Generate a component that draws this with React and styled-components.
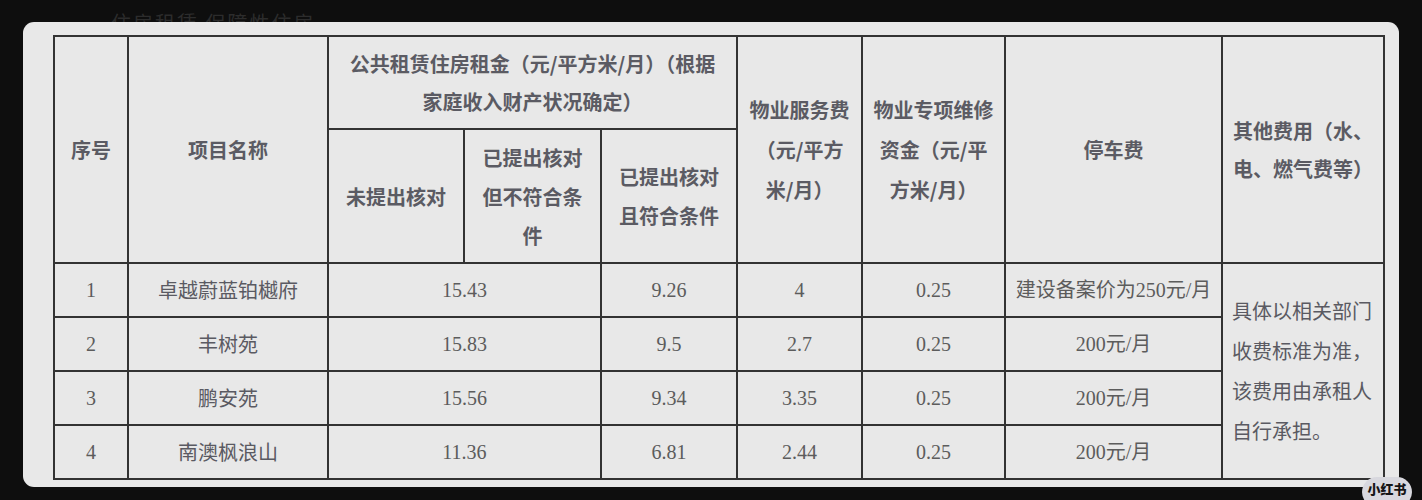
import React from "react";
import styled, { createGlobalStyle } from "styled-components";

const Global = createGlobalStyle`
  html, body { margin: 0; padding: 0; background: #0e0e0e; }
  body { width: 1422px; height: 500px; overflow: hidden; }
`;

const Page = styled.div`
  position: relative;
  width: 1422px;
  height: 500px;
  box-sizing: border-box;
  padding: 0 23px 0 23px;
  background: #0e0e0e;
`;

const Peek = styled.div`
  height: 22px;
  overflow: hidden;
  padding-left: 88px;
  box-sizing: border-box;
  font-family: "Noto Sans CJK SC", sans-serif;
  font-size: 20px;
  line-height: 20px;
  color: #2c2c2c;
  & > span { display: block; margin-top: 13px; letter-spacing: 2px; }
`;

const Card = styled.div`
  width: 1376px;
  height: 465px;
  box-sizing: border-box;
  background: #e8e8e8;
  border-radius: 11px;
  padding: 13px 16px 9px 30px;
`;

const Table = styled.table`
  width: 1330px;
  table-layout: fixed;
  border-collapse: collapse;
  border: 2px solid #3a3a3a;
`;

const HeadCell = styled.th`
  border: 2px solid #333;
  padding: 0 6px;
  font-family: "Noto Sans CJK SC", sans-serif;
  font-weight: 700;
  font-size: 20px;
  line-height: ${(p) => p.$lh || 39}px;
  color: #5b5b63;
  text-align: center;
  vertical-align: middle;
`;

const HeadRow = styled.tr`
  height: ${(p) => p.$h}px;
`;

const BodyRow = styled.tr`
  height: 54px;
`;

const Cell = styled.td`
  border: 2px solid #333;
  padding: 0 6px;
  font-family: "Liberation Serif", "Noto Sans CJK SC", serif;
  font-size: 20px;
  line-height: 24px;
  color: #5c5c5c;
  text-align: center;
  vertical-align: middle;
  white-space: nowrap;
`;

const NameCell = styled(Cell)`
  font-family: "Noto Sans CJK SC", sans-serif;
  font-size: 20px;
  color: #5a5a62;
`;

const NoteCell = styled(Cell)`
  font-family: "Noto Sans CJK SC", sans-serif;
  text-align: left;
  padding: 6px 8px 6px 9px;
  line-height: 40px;
  color: #5a5a62;
  white-space: normal;
`;

const Badge = styled.div`
  position: absolute;
  left: 1362px;
  top: 477px;
  width: 50px;
  height: 30px;
  border-radius: 15px;
  background: #d8d8de;
  font-family: "Noto Sans CJK SC", sans-serif;
  font-weight: 900;
  font-size: 13px;
  line-height: 24px;
  text-align: center;
  color: #151515;
`;

const rows = [
  ["1", "卓越蔚蓝铂樾府", "15.43", "9.26", "4", "0.25", "建设备案价为250元/月"],
  ["2", "丰树苑", "15.83", "9.5", "2.7", "0.25", "200元/月"],
  ["3", "鹏安苑", "15.56", "9.34", "3.35", "0.25", "200元/月"],
  ["4", "南澳枫浪山", "11.36", "6.81", "2.44", "0.25", "200元/月"],
];

const widths = [74, 200, 136, 137, 136, 125, 143, 217, 162];

export default function App() {
  return (
    <Page>
      <Global />
      <Peek><span>住房租赁 保障性住房</span></Peek>
      <Card>
        <Table>
          <colgroup>
            {widths.map((w, i) => (
              <col key={i} style={{ width: w }} />
            ))}
          </colgroup>
          <thead>
            <HeadRow $h={93}>
              <HeadCell rowSpan={2}>序号</HeadCell>
              <HeadCell rowSpan={2}>项目名称</HeadCell>
              <HeadCell colSpan={3} $lh={38}>
                公共租赁住房租金（元/平方米/月）（根据
                <br />
                家庭收入财产状况确定）
              </HeadCell>
              <HeadCell rowSpan={2} $lh={40}>
                物业服务费
                <br />
                （元/平方
                <br />
                米/月）
              </HeadCell>
              <HeadCell rowSpan={2} $lh={40}>
                物业专项维修
                <br />
                资金（元/平
                <br />
                方米/月）
              </HeadCell>
              <HeadCell rowSpan={2}>停车费</HeadCell>
              <HeadCell rowSpan={2} $lh={38}>
                其他费用（水、
                <br />
                电、燃气费等）
              </HeadCell>
            </HeadRow>
            <HeadRow $h={134}>
              <HeadCell>未提出核对</HeadCell>
              <HeadCell>
                已提出核对
                <br />
                但不符合条
                <br />
                件
              </HeadCell>
              <HeadCell>
                已提出核对
                <br />
                且符合条件
              </HeadCell>
            </HeadRow>
          </thead>
          <tbody>
            {rows.map((r, i) => (
              <BodyRow key={r[0]}>
                <Cell>{r[0]}</Cell>
                <NameCell>{r[1]}</NameCell>
                <Cell colSpan={2}>{r[2]}</Cell>
                <Cell>{r[3]}</Cell>
                <Cell>{r[4]}</Cell>
                <Cell>{r[5]}</Cell>
                <Cell>{r[6]}</Cell>
                {i === 0 && (
                  <NoteCell rowSpan={4}>
                    具体以相关部门
                    <br />
                    收费标准为准，
                    <br />
                    该费用由承租人
                    <br />
                    自行承担。
                  </NoteCell>
                )}
              </BodyRow>
            ))}
          </tbody>
        </Table>
      </Card>
      <Badge>小红书</Badge>
    </Page>
  );
}
